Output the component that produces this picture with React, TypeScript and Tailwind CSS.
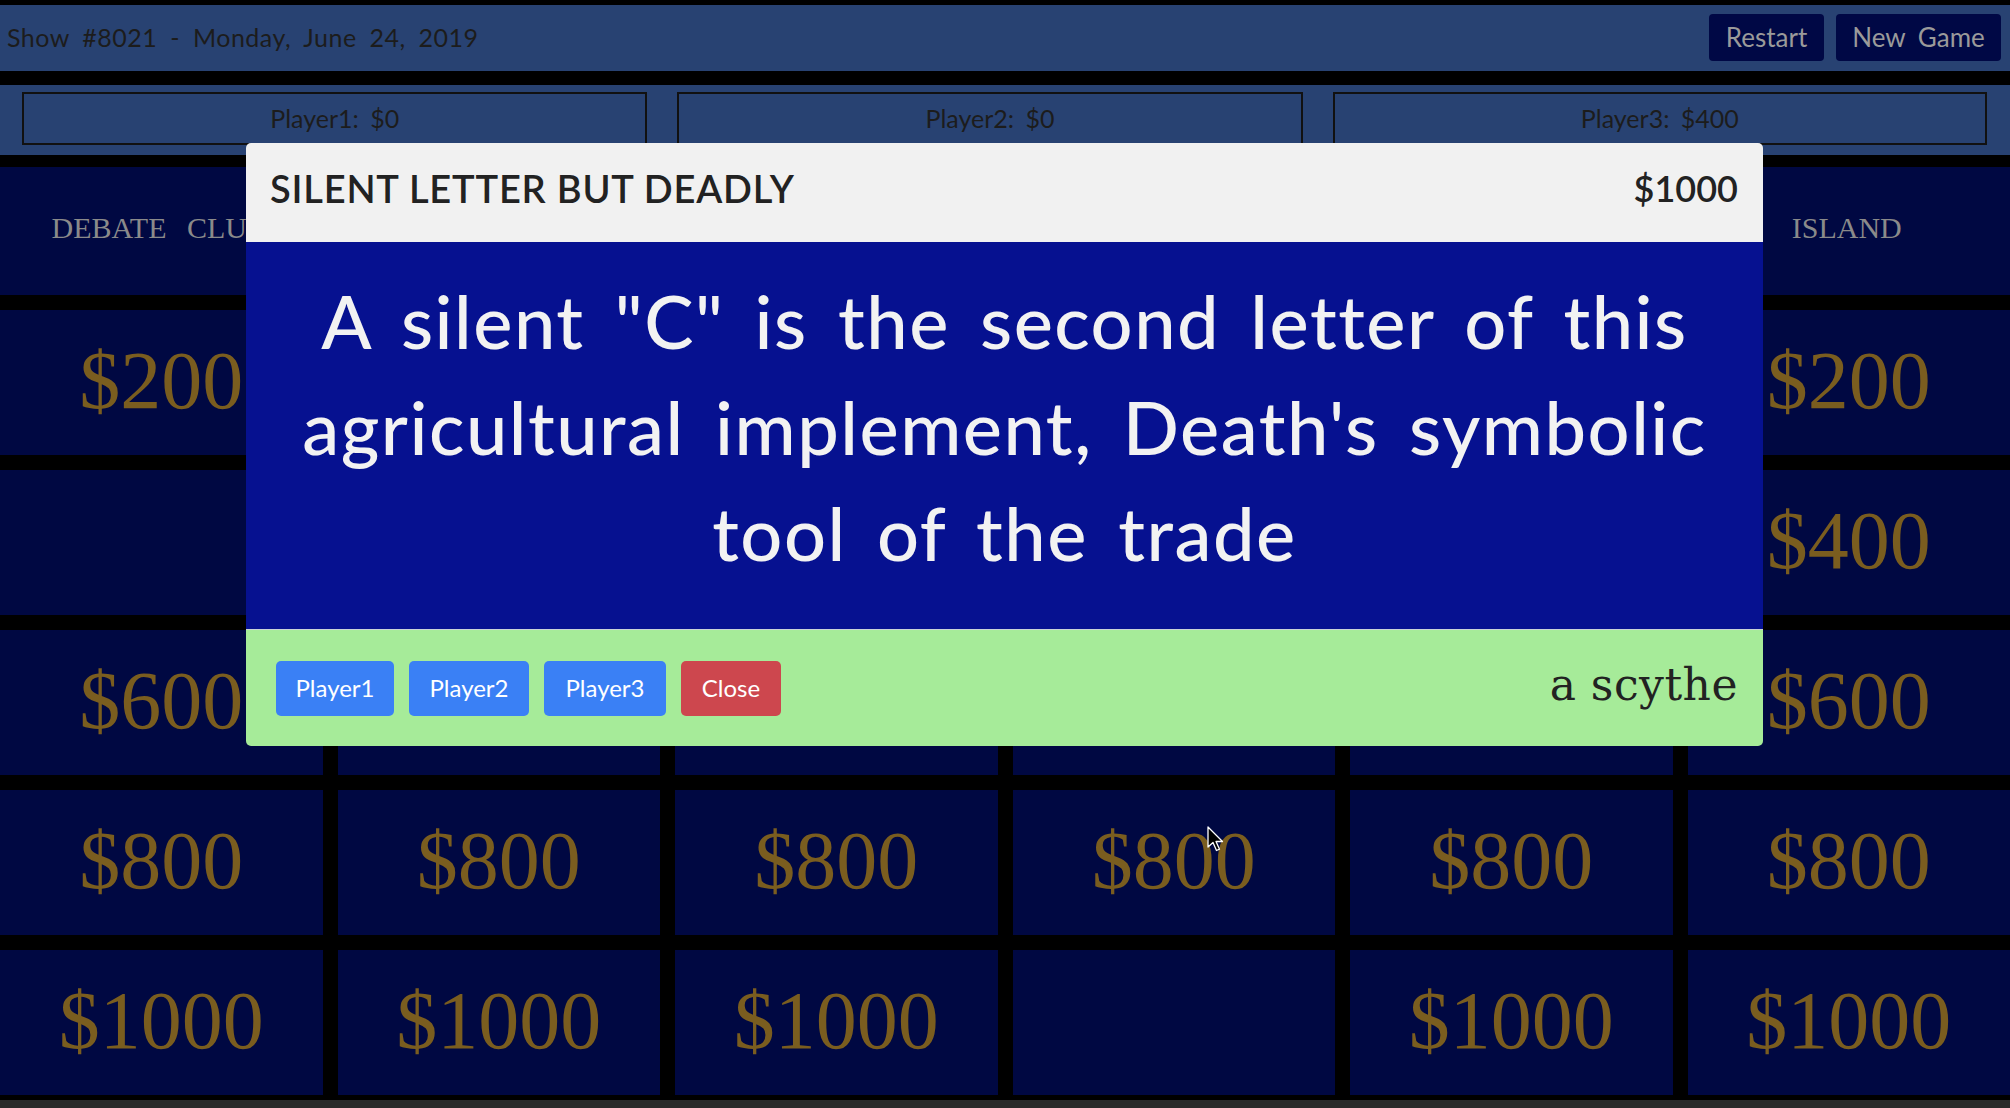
import React from "react";

const cats = ["DEBATE CLUB", "", "", "", "", "ISLAND"];
const values = [200, 400, 600, 800, 1000];
// cells already answered, or covered by the open clue window
const empty: Record<string, boolean> = { "1-0": true, "4-3": true };
const covered = (r: number, c: number) => r <= 2 && c >= 1 && c <= 4;

export default function App() {
  return (
    <div className="relative w-[2010px] h-[1108px] overflow-hidden bg-black" style={{ fontFamily: "Lato, 'Noto Sans', sans-serif" }}>
      <div className="pt-[5px]">
        {/* header */}
        <div className="h-[66px] bg-[#284272] flex items-center justify-between pl-[7px] pr-[9px]">
          <div className="text-[25px] text-[#1c1c1c] tracking-[0.5px] [word-spacing:6px]">Show #8021 - Monday, June 24, 2019</div>
          <div className="flex gap-[12px] -mt-[2px]">
            <button className="h-[47px] w-[115px] rounded-[4px] bg-[#000845] text-[26px] text-[#9a9a9a]">Restart</button>
            <button className="h-[47px] w-[165px] rounded-[4px] bg-[#000845] text-[26px] text-[#9a9a9a] [word-spacing:6px]">New Game</button>
          </div>
        </div>
        {/* players */}
        <div className="mt-[14px] h-[70px] bg-[#284272] flex gap-[30px] pl-[22px] pr-[23px] pt-[7px]">
          {["Player1: $0", "Player2: $0", "Player3: $400"].map((p) => (
            <div key={p} className="flex-auto h-[53px] border-2 border-[#111] flex items-center justify-center text-[25px] text-[#1c1c1c] [word-spacing:5px]">
              {p}
            </div>
          ))}
        </div>
        {/* board */}
        <div className="mt-[12px] grid grid-cols-6 gap-x-[15px] gap-y-[15px] grid-rows-[128px_repeat(5,145px)]">
          {cats.map((c, i) => (
            <div key={"c" + i} className="bg-[#000842] flex items-center justify-center pb-[8px] pr-[4px] text-[30px] text-[#8a8a8a] [word-spacing:13px]" style={{ fontFamily: "'Liberation Serif', serif" }}>
              {c}
            </div>
          ))}
          {values.map((v, r) =>
            [0, 1, 2, 3, 4, 5].map((col) => (
              <div key={r + "-" + col} className="bg-[#000842] flex items-center justify-center pb-[5px] text-[82px] text-[#7a5d1f]" style={{ fontFamily: "'Liberation Serif', serif" }}>
                {empty[r + "-" + col] || covered(r, col) ? "" : "$" + v}
              </div>
            ))
          )}
        </div>
        <div className="mt-[5px] h-[8px] bg-[#2a2a2a]" />
      </div>

      {/* modal */}
      <div className="absolute left-[246px] top-[143px] w-[1517px] rounded-[5px] overflow-hidden">
        <div className="h-[99px] bg-[#f1f1f1] flex items-center justify-between pl-[24px] pr-[25px] text-[#222]">
          <div className="text-[38px] font-semibold tracking-[0.8px] -mt-[9px]">SILENT LETTER BUT DEADLY</div>
          <div className="text-[36px] font-semibold -mt-[9px]">$1000</div>
        </div>
        <div className="h-[387px] bg-[#061190] flex items-center justify-center px-[40px] pb-[18px]">
          <p className="text-center text-[74px] leading-[106px] tracking-[1.5px] text-[#f2f2f2] font-medium [word-spacing:10px]">
            A silent "C" is the second letter of this agricultural implement, Death's symbolic tool of the trade
          </p>
        </div>
        <div className="h-[117px] bg-[#a6eb99] border-t border-[#c9d3d6] flex items-center justify-between pl-[30px] pr-[25px]">
          <div className="flex gap-[15px]">
            <button className="h-[55px] w-[118px] rounded-[5px] bg-[#3a80f5] text-[24px] text-white">Player1</button>
            <button className="h-[55px] w-[120px] rounded-[5px] bg-[#3a80f5] text-[24px] text-white">Player2</button>
            <button className="h-[55px] w-[122px] rounded-[5px] bg-[#3a80f5] text-[24px] text-white">Player3</button>
            <button className="h-[55px] w-[100px] rounded-[5px] bg-[#cd474e] text-[24px] text-white">Close</button>
          </div>
          <div className="text-[44px] text-[#222] -mt-[6px] tracking-[0.5px]" style={{ fontFamily: "'DejaVu Serif', serif" }}>a scythe</div>
        </div>
      </div>

      {/* mouse cursor */}
      <svg className="absolute left-[1207px] top-[826px]" width="18" height="27" viewBox="0 0 18 27">
        <path d="M1 1 L1 21 L6 16.5 L9.5 24.5 L12.5 23.2 L9 15.5 L15.5 15.5 Z" fill="#000" stroke="#fff" strokeWidth="1.3" strokeLinejoin="round" />
      </svg>
    </div>
  );
}
